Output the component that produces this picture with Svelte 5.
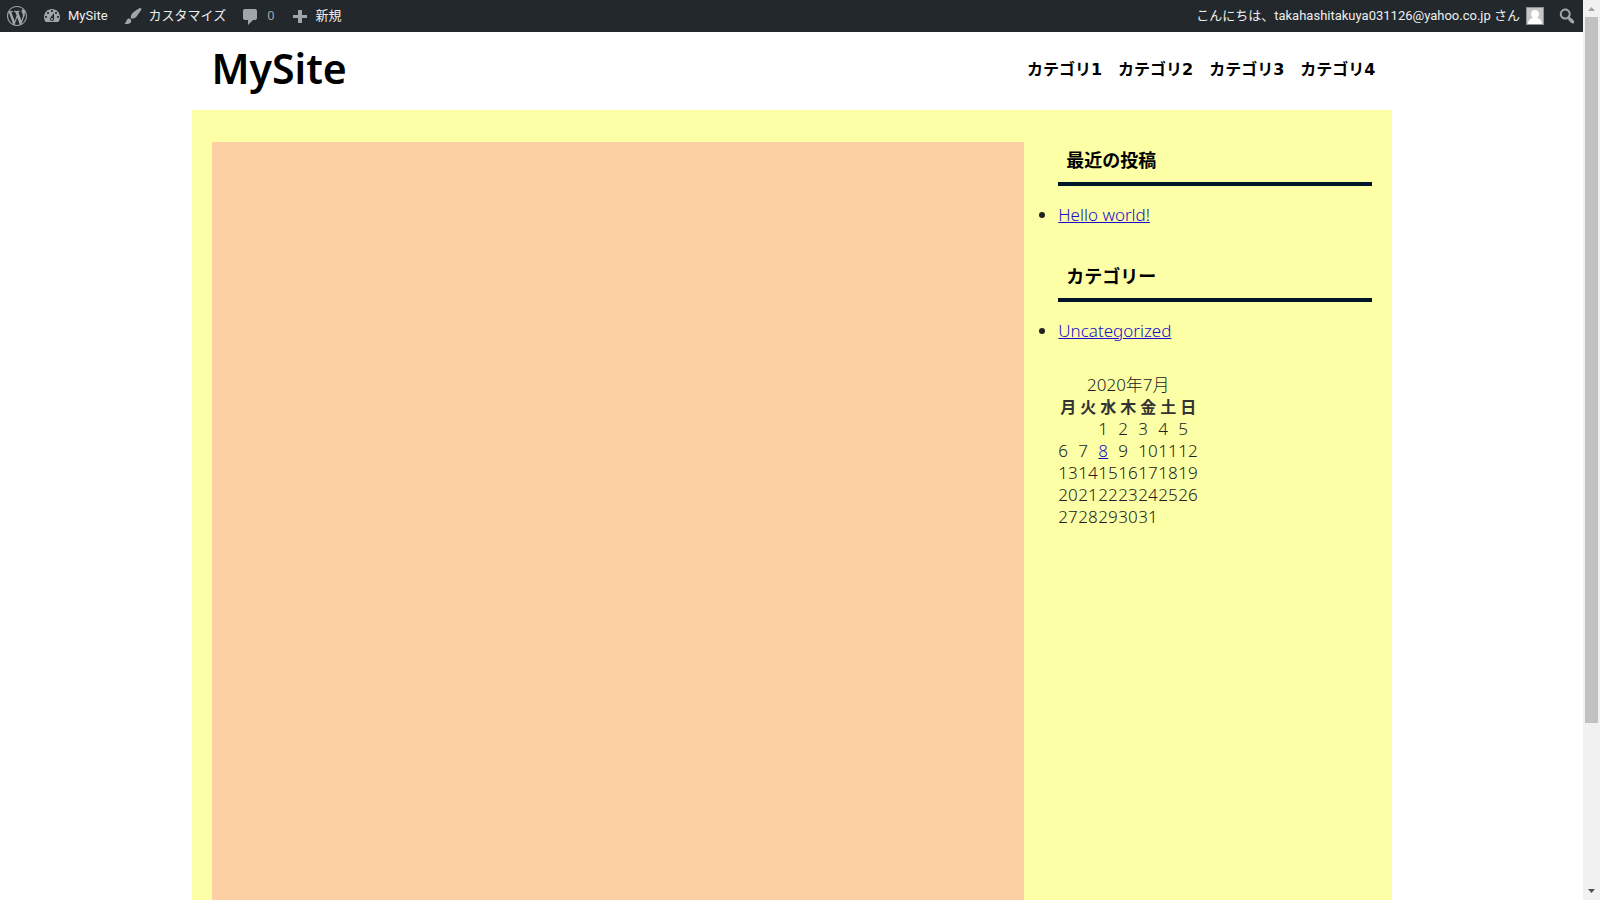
<script>
  const icons = {
    wordpress:
      'M20 10c0-5.51-4.49-10-10-10C4.48 0 0 4.49 0 10c0 5.52 4.48 10 10 10 5.51 0 10-4.48 10-10zM7.78 15.37L4.37 6.22c.55-.02 1.17-.08 1.17-.08.5-.06.44-1.13-.06-1.11 0 0-1.45.11-2.37.11-.18 0-.37 0-.58-.01C4.12 2.69 6.87 1.11 10 1.11c2.33 0 4.45.87 6.05 2.34-.68-.11-1.65.39-1.65 1.58 0 .74.45 1.36.9 2.1.35.61.55 1.36.55 2.46 0 1.49-1.4 5-1.4 5l-3.03-8.37c.54-.02.82-.17.82-.17.5-.05.44-1.25-.06-1.22 0 0-1.44.12-2.38.12-.87 0-2.33-.12-2.33-.12-.5-.03-.56 1.2-.06 1.22l.92.08 1.26 3.41zM17.41 10c.24-.64.74-1.87.43-4.25.7 1.29 1.05 2.71 1.05 4.25 0 3.29-1.73 6.24-4.4 7.78.97-2.59 1.94-5.2 2.92-7.78zM6.1 18.09C3.12 16.65 1.11 13.53 1.11 10c0-1.3.23-2.48.72-3.59C3.25 10.3 4.67 14.2 6.1 18.09zm4.03-6.63l2.58 6.98c-.86.29-1.76.45-2.71.45-.79 0-1.57-.11-2.29-.33.81-2.38 1.62-4.74 2.42-7.1z',
    dashboard:
      'M3.76 16h12.48c1.1-1.37 1.76-3.11 1.76-5 0-4.42-3.58-8-8-8s-8 3.58-8 8c0 1.89.66 3.63 1.76 5zM10 4c.55 0 1 .45 1 1s-.45 1-1 1-1-.45-1-1 .45-1 1-1zM6 6c.55 0 1 .45 1 1s-.45 1-1 1-1-.45-1-1 .45-1 1-1zm8 0c.55 0 1 .45 1 1s-.45 1-1 1-1-.45-1-1 .45-1 1-1zM12 7v6c0 1.1-.9 2-2 2s-2-.9-2-2c0-.57.24-1.08.63-1.45zM4 10c.55 0 1 .45 1 1s-.45 1-1 1-1-.45-1-1 .45-1 1-1zm12 0c.55 0 1 .45 1 1s-.45 1-1 1-1-.45-1-1 .45-1 1-1zm-5 3c0-.55-.45-1-1-1s-1 .45-1 1 .45 1 1 1 1-.45 1-1z',
    brush:
      'M18.33 3.57s.27-.8-.31-1.36c-.53-.52-1.22-.24-1.22-.24-.61.3-5.76 3.47-7.67 5.57-.86.96-2.06 3.79-1.09 4.82.92.98 3.96-.17 4.79-1 2.06-2.06 5.21-7.17 5.5-7.79zM1.4 17.65c2.37-1.56 1.46-3.41 3.23-4.64.93-.65 2.22-.62 3.08.29.63.67.8 2.57-.16 3.46-1.57 1.45-4 1.55-6.15.89z',
    comment:
      'M4 3h10c1.1 0 2 .9 2 2v7c0 1.1-.9 2-2 2h-2l-5 5v-5H4c-1.1 0-2-.9-2-2V5c0-1.1.9-2 2-2z',
    plus: 'M18 9v3h-5v5h-4v-5H4V9h5V4h4v5h5z',
    search:
      'M12.14 4.18c1.87 1.87 2.11 4.75.72 6.89.12.1.22.21.36.31.2.16.47.36.81.59.34.24.56.39.66.47.42.31.73.57.94.78.32.32.6.65.84 1 .25.35.44.69.59 1.04.14.35.21.68.18 1-.02.32-.14.59-.36.81s-.49.34-.81.36c-.31.02-.65-.04-.99-.19-.35-.14-.7-.34-1.04-.59-.35-.24-.68-.52-1-.84-.21-.21-.47-.52-.77-.93-.1-.13-.25-.35-.47-.66-.22-.32-.4-.57-.56-.78-.16-.2-.29-.35-.44-.5-2.07 1.09-4.69.76-6.44-.98-2.14-2.15-2.14-5.64 0-7.78 2.15-2.15 5.63-2.15 7.78 0zm-1.41 6.36c1.36-1.37 1.36-3.58 0-4.95-1.37-1.37-3.59-1.37-4.95 0-1.37 1.37-1.37 3.58 0 4.95 1.36 1.37 3.58 1.37 4.95 0z',
  };
  const tools = [
    { icon: 'wordpress', label: '' },
    { icon: 'dashboard', label: 'MySite' },
    { icon: 'brush', label: 'カスタマイズ' },
    { icon: 'comment', label: '0', muted: true },
    { icon: 'plus', label: '新規' },
  ];
  const categories = ['カテゴリ1', 'カテゴリ2', 'カテゴリ3', 'カテゴリ4'];
  const widgets = [
    { title: '最近の投稿', entries: ['Hello world!'] },
    { title: 'カテゴリー', entries: ['Uncategorized'] },
  ];
  const weekdays = ['月', '火', '水', '木', '金', '土', '日'];
  // July 2020 starts on a Wednesday; weeks run Monday to Sunday.
  const weeks = Array.from({ length: 5 }, (_, w) =>
    Array.from({ length: 7 }, (_, d) => {
      const day = w * 7 + d - 1;
      return day >= 1 && day <= 31 ? day : '';
    })
  );
</script>

{#snippet glyph(name)}
  <svg class="icon" viewBox="0 0 20 20" aria-hidden="true"><path d={icons[name]} fill-rule="evenodd" /></svg>
{/snippet}

<div class="window">
  <div class="view">
    <nav class="adminbar">
      {#each tools as tool}
        <a class="tool" class:muted={tool.muted} href="#top" aria-label={tool.label || 'WordPress'}>
          {@render glyph(tool.icon)}
          {#if tool.label}<span>{tool.label}</span>{/if}
        </a>
      {/each}
      <a class="tool account" href="#top">
        <span>こんにちは、takahashitakuya031126@yahoo.co.jp さん</span>
        <svg class="avatar" viewBox="0 0 18 18" aria-hidden="true">
          <rect width="18" height="18" fill="#8c8f94" />
          <rect x="1" y="1" width="16" height="16" fill="#c6c6c6" />
          <path d="M9 3c2.500 0 4 1.700 4 4 0 1.800-.8 3.200-2 4 2.800.5 4.500 2 5 6H2c.5-4 2.200-5.500 5-6-1.200-.8-2-2.200-2-4 0-2.300 1.500-4 4-4z" fill="#fff" />
        </svg>
      </a>
      <button class="tool search" aria-label="検索">{@render glyph('search')}</button>
    </nav>

    <div class="site">
      <header>
        <h1>MySite</h1>
        <nav class="menu">
          {#each categories as category}<a href="#top">{category}</a>{/each}
        </nav>
      </header>
      <div class="content">
        <main></main>
        <aside>
          {#each widgets as widget}
            <section>
              <h2>{widget.title}</h2>
              <ul>
                {#each widget.entries as entry}<li><a href="#top">{entry}</a></li>{/each}
              </ul>
            </section>
          {/each}
          <table>
            <caption>2020年7月</caption>
            <thead>
              <tr>{#each weekdays as weekday}<th scope="col">{weekday}</th>{/each}</tr>
            </thead>
            <tbody>
              {#each weeks as week}
                <tr>
                  {#each week as day}
                    <td>{#if day === 8}<a href="#top">8</a>{:else}{day}{/if}</td>
                  {/each}
                </tr>
              {/each}
            </tbody>
          </table>
        </aside>
      </div>
    </div>
  </div>

  <div class="scrollbar" aria-hidden="true">
    <svg viewBox="0 0 17 17"><path d="M5 11h7L8.500 7z" fill="#a3a3a3" /></svg>
    <div class="track"><div class="thumb"></div></div>
    <svg viewBox="0 0 17 17"><path d="M5 6h7L8.500 10z" fill="#505050" /></svg>
  </div>
</div>

<style>
  :global(body) {
    margin: 0;
    background: #fff;
  }
  .window {
    display: grid;
    grid-template-columns: minmax(0, 1fr) 17px;
    height: 100vh;
    overflow: hidden;
    color: #222;
    font: 300 17px/22px 'Noto Sans', 'Noto Sans CJK JP', sans-serif;
  }
  .view {
    display: flex;
    flex-direction: column;
    min-height: 0;
  }
  .adminbar {
    display: flex;
    flex: none;
    height: 32px;
    background: #23282d;
    font: 13px/32px Roboto, 'Noto Sans CJK JP', sans-serif;
  }
  .tool {
    display: flex;
    align-items: center;
    gap: 6px;
    padding: 0 8px 0 7px;
    border: 0;
    background: none;
    color: #eee;
    text-decoration: none;
    white-space: nowrap;
  }
  .muted {
    color: #9ca1a6;
  }
  .icon {
    width: 20px;
    height: 20px;
    fill: #a0a5aa;
  }
  .account {
    margin-left: auto;
  }
  .avatar {
    width: 18px;
    height: 18px;
  }
  .search {
    padding: 0 6px 0 5px;
  }
  .site {
    display: flex;
    flex: 1;
    flex-direction: column;
    box-sizing: border-box;
    width: 100%;
    max-width: 1200px;
    margin: 0 auto;
  }
  header {
    display: flex;
    align-items: flex-start;
    justify-content: space-between;
    height: 66px;
    padding: 12px 16px 0 20px;
  }
  h1 {
    margin: 0;
    color: #000;
    font: 600 41px/48px 'Noto Sans', sans-serif;
  }
  .menu {
    display: flex;
    gap: 16px;
    font: 700 16px/52px 'DejaVu Sans', 'Noto Sans CJK JP', sans-serif;
  }
  .menu a {
    color: #000;
    text-decoration: none;
  }
  .content {
    display: flex;
    flex: 1;
    justify-content: space-between;
    padding: 32px 20px 0;
    background: #fcffa5;
  }
  main {
    width: 70%;
    background: #fdd0a4;
  }
  aside {
    width: 27%;
  }
  section {
    padding-bottom: 32px;
  }
  h2 {
    margin: 0;
    padding: 6px 8px 12px;
    border-bottom: 4px solid #001529;
    color: #000;
    font: 700 18px/22px 'Noto Sans CJK JP', sans-serif;
  }
  ul {
    margin: 18px 0 0;
    padding: 0;
  }
  aside a {
    color: #1a0dcf;
  }
  table {
    border-collapse: collapse;
    table-layout: fixed;
    width: 140px;
  }
  th,
  td {
    height: 22px;
    padding: 0;
  }
  th {
    color: #333;
    font-size: 16px;
    font-weight: 700;
  }
  .scrollbar {
    display: flex;
    flex-direction: column;
    background: #f1f1f1;
  }
  .scrollbar svg {
    flex: none;
    width: 17px;
    height: 17px;
  }
  .track {
    flex: 1;
    padding: 0 2px;
  }
  .thumb {
    height: 81.5%;
    background: #c1c1c1;
  }
</style>
